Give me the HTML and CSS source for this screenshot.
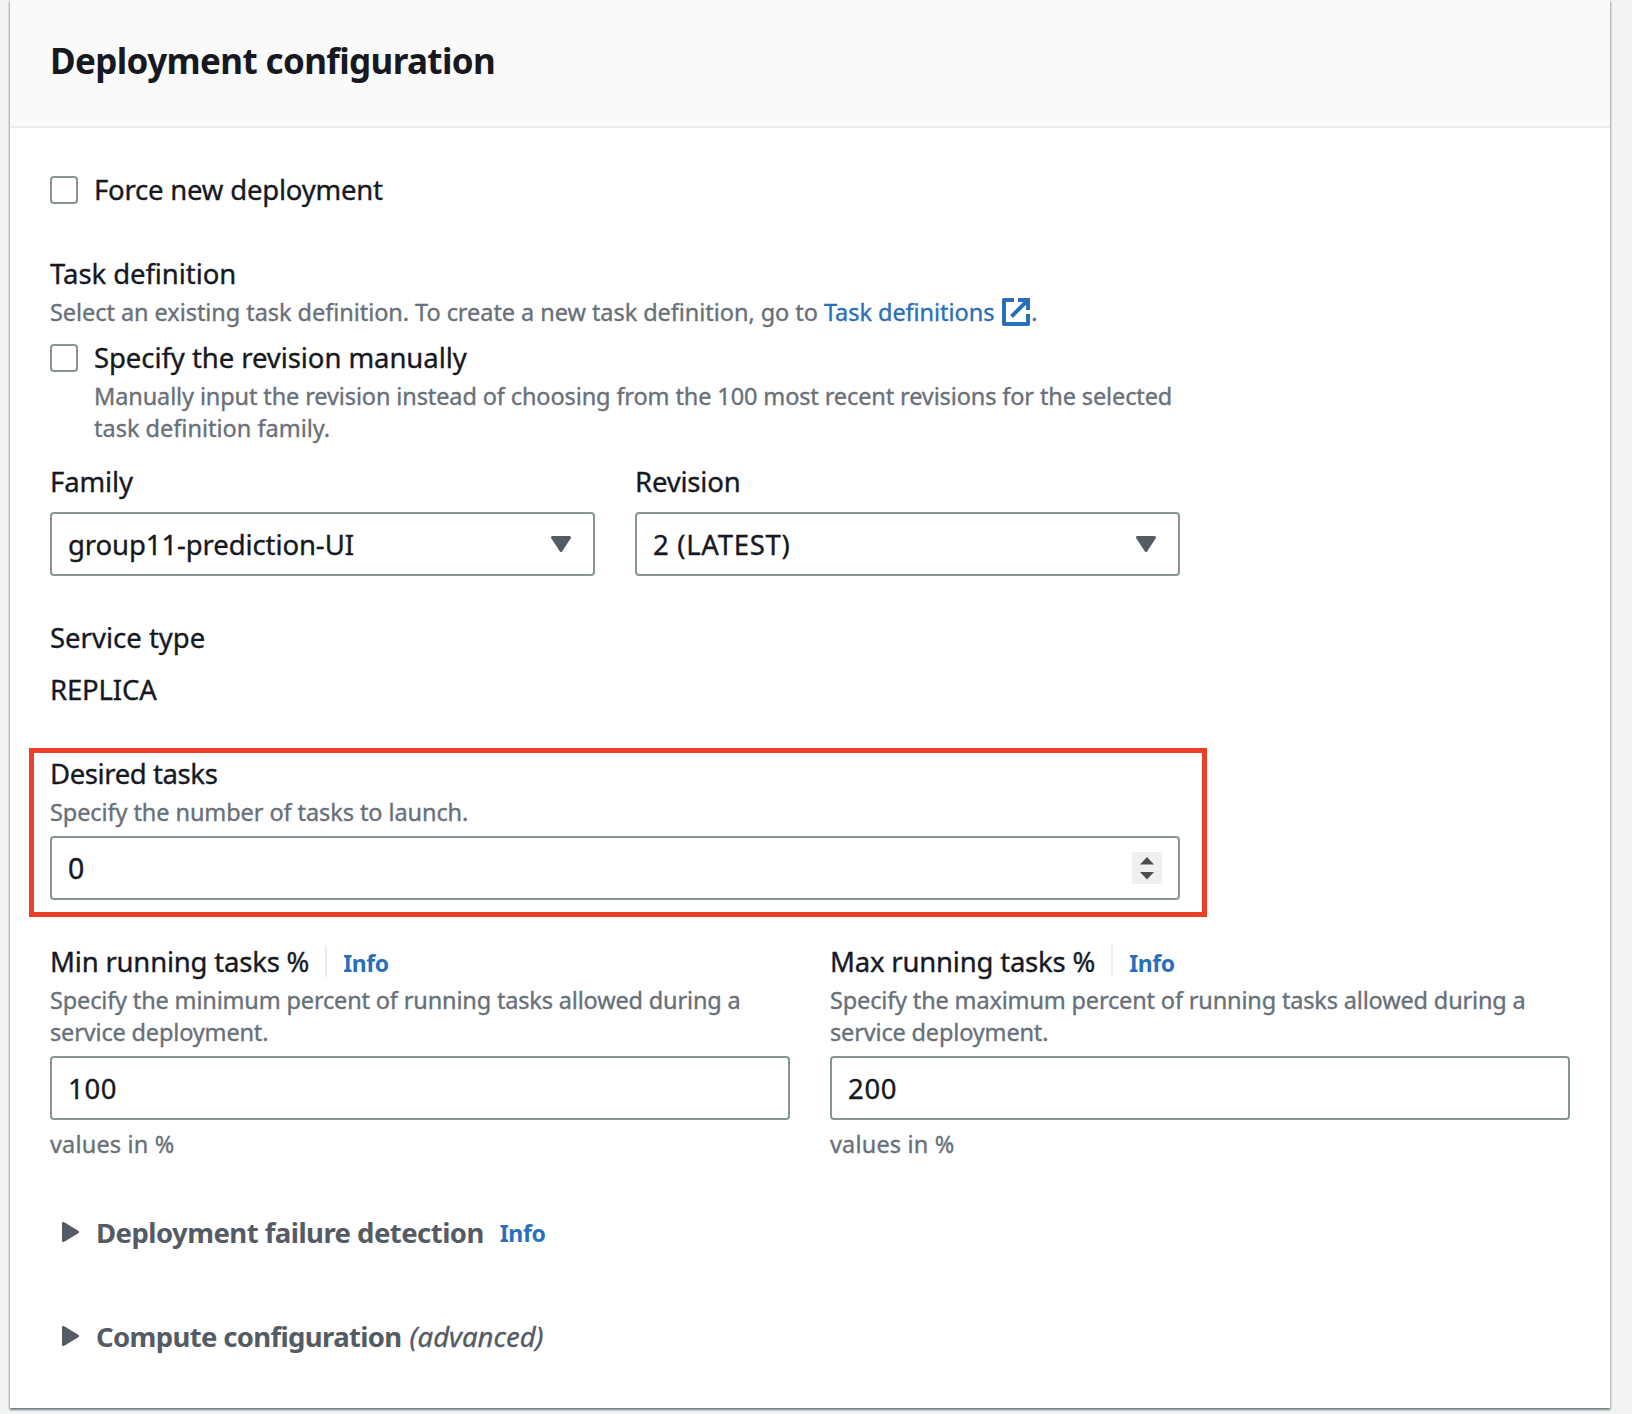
FILE: index.html
```html
<!DOCTYPE html>
<html lang="en">
<head>
<meta charset="utf-8">
<title>Deployment configuration</title>
<link rel="stylesheet" href="styles.css">
</head>
<body>
<main class="card">
  <header class="card-header"><h2 class="title">Deployment configuration</h2></header>
  <div class="card-body">
    <label class="check-row"><span class="checkbox"></span><span class="label t-force">Force new deployment</span></label>

    <section class="task-definition">
      <div class="label t-taskdef">Task definition</div>
      <div class="hint hint-link"><span class="t-select">Select an existing task definition. To create a new task definition, go to <a class="link">Task definitions</a></span><svg class="external" viewBox="0 0 28 28"><path d="M12 2H2v24h24V16" fill="none" stroke="currentColor" stroke-width="4" stroke-linejoin="round"/><path d="M16 2h10v10M25 3L9.500 18.500" fill="none" stroke="currentColor" stroke-width="4"/></svg><span>.</span></div>
      <label class="check-row check-revision"><span class="checkbox"></span><span class="label t-specify">Specify the revision manually</span></label>
      <div class="hint hint-indented"><span class="t-manual">Manually input the revision instead of choosing from the 100 most recent revisions for the selected</span><br>task definition family.</div>
      <div class="selects">
        <div class="field">
          <div class="label t-family">Family</div>
          <div class="control select"><span class="t-group">group11-prediction-UI</span><svg class="caret" viewBox="0 0 20 16"><path d="M1.500 1.500h17L10 14.500z" fill="currentColor" stroke="currentColor" stroke-width="3" stroke-linejoin="round"/></svg></div>
        </div>
        <div class="field">
          <div class="label t-revision">Revision</div>
          <div class="control select"><span class="t-latest">2 (LATEST)</span><svg class="caret" viewBox="0 0 20 16"><path d="M1.500 1.500h17L10 14.500z" fill="currentColor" stroke="currentColor" stroke-width="3" stroke-linejoin="round"/></svg></div>
        </div>
      </div>
    </section>

    <section class="service-type">
      <div class="label">Service type</div>
      <div class="label value">REPLICA</div>
    </section>

    <section class="highlight">
      <div class="label t-desired">Desired tasks</div>
      <div class="hint t-number">Specify the number of tasks to launch.</div>
      <div class="control number"><span>0</span><svg class="spinner" viewBox="0 0 30 32"><path d="M8 12.500L15 5l7 7.500zM8 20h14l-7 7.500z" fill="#4d4d4d"/></svg></div>
    </section>

    <section class="limits">
      <div class="field">
        <div class="label-row"><span class="label t-limit">Min running tasks %</span><a class="info divided"><span class="info-text">Info</span></a></div>
        <div class="hint t-limit-hint">Specify the minimum percent of running tasks allowed during a<br>service deployment.</div>
        <div class="control">100</div>
        <div class="hint t-values">values in %</div>
      </div>
      <div class="field">
        <div class="label-row"><span class="label t-limit">Max running tasks %</span><a class="info divided"><span class="info-text">Info</span></a></div>
        <div class="hint t-limit-hint">Specify the maximum percent of running tasks allowed during a<br>service deployment.</div>
        <div class="control">200</div>
        <div class="hint t-values">values in %</div>
      </div>
    </section>

    <div class="expander"><svg class="arrow" viewBox="0 0 17 20"><path d="M1.500 1.500v17L15.500 10z" fill="currentColor" stroke="currentColor" stroke-width="3" stroke-linejoin="round"/></svg><span class="t-failure">Deployment failure detection</span><a class="info">Info</a></div>
    <div class="expander expander-last"><svg class="arrow" viewBox="0 0 17 20"><path d="M1.500 1.500v17L15.500 10z" fill="currentColor" stroke="currentColor" stroke-width="3" stroke-linejoin="round"/></svg><span class="t-compute">Compute configuration</span><em class="advanced">(advanced)</em></div>
  </div>
</main>
</body>
</html>
```
FILE: styles.css
```css
* { box-sizing: border-box; }
body {
  margin: 0;
  height: 1414px;
  overflow: hidden;
  background: #f2f3f3;
  color: #16191f;
  font-family: "Noto Sans", "Open Sans", sans-serif;
  font-size: 27.5px;
}
.card {
  width: 1600px;
  height: 1408px;
  margin-left: 10px;
  background: #fff;
  box-shadow: 0 2px 2px 0 rgba(0, 28, 36, .4), 1px 1px 2px 0 rgba(0, 28, 36, .2), -1px 1px 2px 0 rgba(0, 28, 36, .2);
}
.card-header {
  height: 128px;
  padding: 37px 40px 0;
  background: #fafafa;
  border-bottom: 2px solid #eaeded;
}
.title { margin: 0; font-size: 35px; line-height: 48px; font-weight: 700; letter-spacing: -.62px; white-space: nowrap; }
.card-body { padding: 42px 40px 0; }
.label, .hint, .control { -webkit-text-stroke: .35px currentColor; }
.label { line-height: 40px; white-space: nowrap; }
.hint { font-size: 23.5px; line-height: 32px; color: #687078; white-space: nowrap; }
.check-row { display: flex; align-items: center; gap: 16px; height: 40px; }
.checkbox { width: 28px; height: 28px; border: 2px solid #879596; border-radius: 4px; }
.task-definition { margin-top: 44px; }
.hint-link { display: flex; align-items: center; margin-top: 2px; }
.link, .info, .external { color: #2a70b8; }
.external { width: 28px; height: 28px; margin: 0 1px 0 8px; }
.check-revision { margin-top: 10px; }
.hint-indented { margin: 2px 0 0 44px; }
.selects { display: grid; grid-template-columns: 545px 545px; gap: 40px; margin-top: 18px; }
.control {
  display: flex;
  align-items: center;
  justify-content: space-between;
  height: 64px;
  padding: 0 16px;
  border: 2px solid #879596;
  border-radius: 4px;
  white-space: nowrap;
}
.select { margin-top: 10px; padding-right: 22px; }
.caret { width: 20px; height: 16px; color: #545b64; }
.service-type { margin-top: 42px; }
.value { margin-top: 12px; letter-spacing: -.15px; }
.highlight {
  width: 1178px;
  height: 169px;
  margin: 38px 0 0 -21px;
  padding: 1px 22px 0 16px;
  border: 5px solid #ec4026;
}
.highlight .hint { margin-top: 2px; }
.highlight .control { margin-top: 8px; }
.number { font-size: 28.5px; }
.spinner { width: 30px; height: 32px; background: #f0f0f0; }
.limits { display: grid; grid-template-columns: 740px 740px; gap: 40px; margin-top: 25px; }
.label-row { display: flex; align-items: center; height: 40px; }
.label-row + .hint { margin-top: 2px; }
.limits .control { margin: 8px 0; letter-spacing: .7px; }
.info { font-size: 23px; line-height: 32px; font-weight: 700; letter-spacing: -.4px; }
.divided { height: 32px; margin: -2px 0 0 16px; padding-left: 16px; border-left: 2px solid #eaeded; }
.info-text { display: block; padding-top: 2px; }
.expander { display: flex; align-items: center; height: 40px; margin-top: 52px; padding-left: 12px; color: #545b64; font-weight: 700; white-space: nowrap; }
.expander-last { margin-top: 64px; }
.arrow { width: 17px; height: 20px; margin-right: 17px; }
.expander .info { margin: 2px 0 0 16px; }
.advanced { margin-left: 8px; font-weight: 400; -webkit-text-stroke: .35px currentColor; }

/* Tracking per text run */
.t-force { letter-spacing: -.21px; }
.t-taskdef, .t-specify { letter-spacing: -.07px; }
.t-select { letter-spacing: -.055px; }
.t-manual { letter-spacing: -.118px; }
.t-family, .t-group { letter-spacing: -.1px; }
.t-revision { letter-spacing: -.2px; }
.t-latest { letter-spacing: .7px; }
.t-desired { letter-spacing: -.4px; }
.t-number { letter-spacing: -.085px; }
.t-limit { letter-spacing: -.2px; }
.t-limit-hint { letter-spacing: -.16px; }
.t-values { letter-spacing: .17px; }
.t-failure { letter-spacing: -.54px; }
.t-compute { letter-spacing: -.65px; }
```
